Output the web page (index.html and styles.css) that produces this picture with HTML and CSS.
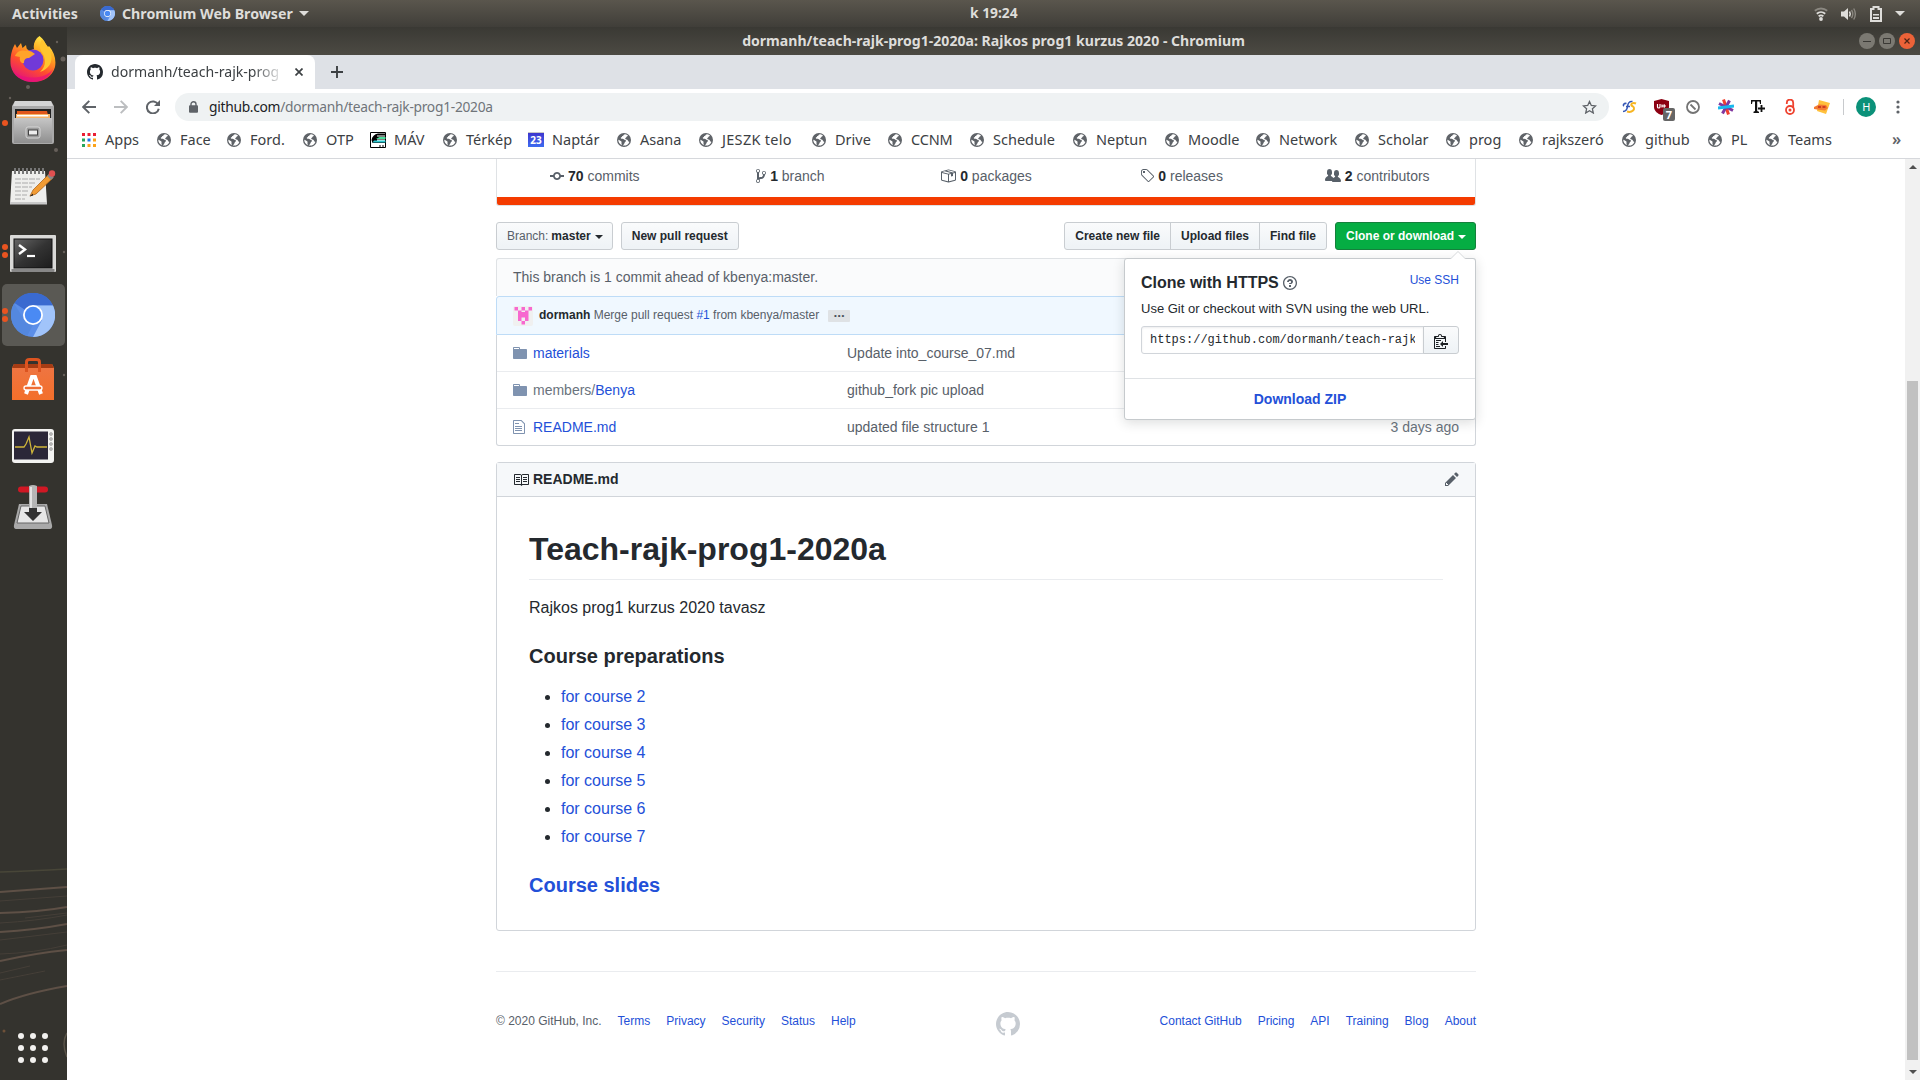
FILE: index.html
```html
<!DOCTYPE html>
<html lang="en">
<head>
<meta charset="utf-8">
<title>dormanh/teach-rajk-prog1-2020a: Rajkos prog1 kurzus 2020</title>
<link rel="stylesheet" href="styles.css">
</head>
<body>
<svg width="0" height="0" class="defs">
  <defs>
    <symbol id="globe" viewBox="0 0 14 14"><circle cx="7" cy="7" r="7" fill="#5f6368"/><path d="M8.2 1.2C6.8 1.6 6.1 2.3 6 3.4c-.3.9-1.8.3-2.2 1.4-.1.7.6 1.1 1.3 1 1 0 1.400.5 2.300.9.9.3 1.800.5 1.600 1.400-.3.9-1.500 1.300-1.700 2.300-.1.900-.9 1.400-1.600 2 2.800.7 5.800-.8 6.700-3.500-.7-.2-1.300-.7-1.500-1.500-.5-1.200-2.400-.6-2.700-1.700-.1-.9 1.100-.9 1.200-1.700.4-.8 1.400-.7 1.600-1.300C10.500 2 9.400 1.300 8.200 1.200z" fill="#fff"/><path d="M1.300 6.800c.9.300 2.300.9 3.100 1.700.5.700-.2 1.500.2 2.400l.3 1.300C2.700 11.300 1.200 9.300 1.300 6.800z" fill="#fff"/></symbol>
    <symbol id="chromium" viewBox="0 0 44 44"><circle cx="22" cy="22" r="22" fill="#5b8ee8"/><path d="M22 22 3.500 10A22 22 0 0 1 42 12.500H22z" fill="#3a6ad0"/><path d="M22 12.500h20A22 22 0 0 1 22 44l9-17z" fill="#a1c4fa"/><path d="M3 10.500 13.500 27 22 32l-6 11A22 22 0 0 1 3 10.500z" fill="#5488df"/><circle cx="22" cy="22" r="10" fill="#fff"/><circle cx="22" cy="22" r="8.200" fill="#4a8af4"/></symbol>
    <symbol id="octocat" viewBox="0 0 16 16"><path fill-rule="evenodd" d="M8 0C3.580 0 0 3.580 0 8c0 3.540 2.290 6.530 5.470 7.590.4.070.55-.17.55-.38 0-.19-.01-.82-.01-1.490-2.010.37-2.530-.49-2.690-.94-.09-.23-.48-.94-.82-1.130-.28-.15-.68-.52-.01-.53.63-.01 1.080.58 1.230.82.72 1.210 1.870.87 2.330.66.070-.52.28-.87.51-1.070-1.780-.2-3.640-.89-3.640-3.950 0-.87.31-1.590.82-2.150-.08-.2-.36-1.020.08-2.120 0 0 .67-.21 2.200.82.64-.18 1.320-.27 2-.27.68 0 1.360.09 2 .27 1.530-1.040 2.200-.82 2.200-.82.44 1.100.16 1.920.08 2.120.51.56.82 1.270.82 2.150 0 3.070-1.870 3.750-3.650 3.950.29.25.54.73.54 1.480 0 1.070-.01 1.930-.01 2.200 0 .21.15.46.55.38A8.013 8.013 0 0 0 16 8c0-4.420-3.580-8-8-8z"/></symbol>
    <linearGradient id="ffg" x1="0.800" y1="0" x2="0.300" y2="1"><stop offset="0" stop-color="#fff44f"/><stop offset=".35" stop-color="#ffa51f"/><stop offset=".65" stop-color="#ff4d2e"/><stop offset="1" stop-color="#e3127c"/></linearGradient>
    <linearGradient id="cab" x1="0" y1="0" x2="0" y2="1"><stop offset="0" stop-color="#c6c6c6"/><stop offset="1" stop-color="#8f8f8f"/></linearGradient>
    <linearGradient id="scr" x1="0" y1="0" x2="1" y2="1"><stop offset="0" stop-color="#666"/><stop offset=".5" stop-color="#333"/><stop offset="1" stop-color="#1c1c1c"/></linearGradient>
    <linearGradient id="bag" x1="0" y1="0" x2="0" y2="1"><stop offset="0" stop-color="#ee7544"/><stop offset="1" stop-color="#f36f2a"/></linearGradient>
  </defs>
</svg>

<header class="topbar">
  <span class="activities">Activities</span>
  <svg class="app-icon" width="15" height="15"><use href="#chromium"/></svg>
  <span class="app-name">Chromium Web Browser</span>
  <i class="tri"></i>
  <span class="clock">k 19:24</span>
  <div class="tray">
    <svg width="14" height="14" viewBox="0 0 14 14" fill="none" stroke-width="1.800"><path d="M.8 3.800a9.500 9.500 0 0 1 12.400 0" stroke="#8b8881"/><path d="M2.800 6.700a6.500 6.500 0 0 1 8.400 0M4.600 9.200a4 4 0 0 1 4.800 0" stroke="#deddda"/><circle cx="7" cy="12" r="1.900" fill="#deddda"/></svg>
    <svg width="16" height="14" viewBox="0 0 16 14" fill="none"><path d="M0 4.500h3L7 1v12L3 9.500H0z" fill="#deddda"/><path d="M8.500 4.500q1.500 2.500 0 5" stroke="#deddda" stroke-width="1.500"/><path d="M10.500 3q2.600 4 0 8M12.700 1.500q3.300 5.500 0 11" stroke="#8b8881" stroke-width="1.400"/></svg>
    <svg width="12" height="16" viewBox="0 0 12 16"><path d="M1 3h2.500V1h5v2H11v12H1z" fill="none" stroke="#deddda" stroke-width="2"/><path d="M3 8h6v1.500H3zM3 11h6v2H3z" fill="#deddda"/></svg>
    <i class="tri"></i>
  </div>
</header>

<div class="desktop">
  <nav class="dock">
    <svg class="wall" width="67" height="1053" viewBox="0 27 67 1053" fill="none" stroke="#5e5046" stroke-width="1.500">
      <path d="M0 872q30-1 67-3" stroke="#484638"/><path d="M0 892l67-5M0 913q40-1 67-6M0 932q35-2 67-8M0 961q36-8 67-11M0 1004q26-11 67-18" stroke-width="2"/>
      <path d="M0 923q36-2 67-8M25 918l42-5M0 954q34-1 67-9M0 980l45-9M0 973l30-7M0 901l67-5M0 940l67-8" stroke="#453f38" stroke-width="1"/>
      <path d="M67 1033q-6 10 0 24" stroke="#595348"/>
      <g fill="#66605a" stroke="none"><circle cx="63" cy="59" r="2.500"/><circle cx="28" cy="87" r="2"/><circle cx="56" cy="150" r="2"/><circle cx="10" cy="98" r="1.200"/><circle cx="57" cy="42" r="1.200"/><circle cx="64" cy="252" r="1.200"/><circle cx="64" cy="375" r="1.200"/><circle cx="4" cy="1031" r="1.500" fill="#6d5038"/></g>
    </svg>
    <div class="slot">
      <svg width="46" height="48" viewBox="0 0 46 48"><path d="M29.500 1c4 3 6.500 7 7.500 12l2-2c5 6 7.500 13 6 21C42.500 41 34 47 23 47S3 41 .8 31C-.5 23 2 14 5 9l2 4 4-5 1.500 5L16 10c.5 3 .5 5 4 5.500l4-1.500c-1-5 1-10 5.500-13z" fill="url(#ffg)"/><circle cx="23" cy="25" r="10.500" fill="#7139d8"/><path d="M14 28c0-4 2-5 5-5l6-4c-3-3-7-4-9-3-6-2-10 2-11 5l5 1c-1 3 1 7 4 6z" fill="#ffa32a"/><path d="M31 16c5 6 6 15-1 21 9-3 13-10 11-18-1-7-6-10-9-15-2 4-3 8-1 12z" fill="#ffc52e"/><path d="M3 36c7 8 32 10 40-2-3 8-11 13-20 13S6 42 3 36z" fill="#e8107c" opacity=".7"/></svg>
    </div>
    <div class="slot"><i class="dots one"></i>
      <svg width="42" height="44" viewBox="0 0 42 44"><path d="M3 0h36l3 5v36q0 2-2 2H2q-2 0-2-2V5z" fill="#a9a9a9"/><path d="M3 0h36l2 5H1z" fill="#d4d4d4"/><path d="M3 8h36v12H3z" fill="#222"/><path d="M5 10h30l2 8H5z" fill="#e0571b"/><path d="M4 13h34v5H4z" fill="#f5b46a"/><path d="M5 14h31v1.500H5z" fill="#fff"/><path d="M2 17h38v25H2z" fill="url(#cab)"/><rect x="14" y="26" width="14" height="11" rx="2" fill="#9b9b9b" stroke="#d6d6d6"/><rect x="16.500" y="29" width="9" height="5" fill="#eee" stroke="#444"/></svg>
    </div>
    <div class="slot">
      <svg width="46" height="38" viewBox="0 0 46 38"><path d="M2 3h33l2 33H0z" fill="#eeeeec"/><path d="M0 34h37v2.500H0z" fill="#c9c9c9"/><path d="M5 0v6M9 0v6M13 0v6M17 0v6M21 0v6M25 0v6M29 0v6M33 0v6" stroke="#777" stroke-width="2"/><path d="M5 11h25M5 15h21M5 19h17M5 23h14M5 27h12M5 31h10" stroke="#aaa" stroke-dasharray="6 1"/><path d="M20 28l3-6L39 6l4 4-17 16z" fill="#f19b33" stroke="#a35a12" stroke-width=".7"/><path d="M37 8l3-3 4 4-3 3z" fill="#888"/><circle cx="42" cy="5.500" r="3.200" fill="#e05050"/><path d="M19.500 28.500l3.500-3v2z" fill="#222"/></svg>
    </div>
    <div class="slot low"><i class="dots two"></i>
      <svg width="46" height="37" viewBox="0 0 46 37"><rect width="46" height="37" rx="1" fill="#d9d9d7"/><rect x="1.500" y="34" width="43" height="3" fill="#888"/><rect x="4" y="4" width="38" height="29" fill="url(#scr)" stroke="#111"/><path d="M9 10l6 4.500L9 19" fill="none" stroke="#fff" stroke-width="2.400"/><path d="M17 21h8" stroke="#fff" stroke-width="2.200"/></svg>
    </div>
    <div class="slot active"><i class="dots two"></i><svg width="44" height="44"><use href="#chromium"/></svg></div>
    <div class="slot">
      <svg width="42" height="43" viewBox="0 0 42 43"><path d="M0 10l2-4h38l2 4v32H0z" fill="url(#bag)"/><path d="M0 10l2-4h38l2 4z" fill="#a63c14"/><path d="M14.500 14V4q0-2.500 3-2.500h7q3 0 3 2.500v10" fill="none" stroke="#dc5420" stroke-width="3"/><path d="M14 36l6-17h3l6 17" fill="none" stroke="#fff" stroke-width="4"/><rect x="12" y="28" width="18" height="4" rx="2" fill="#ef6c33" stroke="#fff" stroke-width="1.300"/></svg>
    </div>
    <div class="slot lower">
      <svg width="42" height="34" viewBox="0 0 42 34"><rect width="42" height="34" rx="3" fill="#f3f3f1"/><rect x="2" y="2.500" width="34" height="28" fill="#2b2738"/><path d="M3 18h9l2-3 3-7 3 16 3-7 2 1h10" fill="none" stroke="#cfb53a" stroke-width="1.300"/><g fill="#bbb" stroke="#888" stroke-width=".5"><circle cx="39" cy="5" r="1.500"/><circle cx="39" cy="10" r="1.500"/><circle cx="39" cy="15" r="1.500"/><circle cx="39" cy="20" r="1.500"/></g></svg>
    </div>
    <div class="slot">
      <svg width="40" height="45" viewBox="0 0 40 45"><path d="M6 19h28l5 21q.5 4-2 4H3q-2.500 0-2-4z" fill="#a9a9a9"/><path d="M8 21h24l4 17H4z" fill="#e6e6e6" stroke="#666"/><rect x="5" y="1.500" width="30" height="6" rx="3" fill="#d01824"/><path d="M16 1q4-2 8 0v27h-8z" fill="#b5b5b5"/><path d="M18 2v26" stroke="#e2e2e2" stroke-width="2"/><path d="M11 27h5v-4h8v4h5l-9 9z" fill="#333"/></svg>
    </div>
    <svg class="grid-icon" width="30" height="30" viewBox="0 0 30 30" fill="#f2f1ef"><circle cx="3" cy="3" r="3"/><circle cx="15" cy="3" r="3"/><circle cx="27" cy="3" r="3"/><circle cx="3" cy="15" r="3"/><circle cx="15" cy="15" r="3"/><circle cx="27" cy="15" r="3"/><circle cx="3" cy="27" r="3"/><circle cx="15" cy="27" r="3"/><circle cx="27" cy="27" r="3"/></svg>
  </nav>

  <section class="window">
    <div class="titlebar">
      <span class="wtitle">dormanh/teach-rajk-prog1-2020a: Rajkos prog1 kurzus 2020 - Chromium</span>
      <div class="wbtns">
        <svg width="16" height="16" viewBox="0 0 16 16"><circle cx="8" cy="8" r="8" fill="#7b7972"/><path d="M4 8.500h8" stroke="#3a3935"/></svg>
        <svg width="16" height="16" viewBox="0 0 16 16"><circle cx="8" cy="8" r="8" fill="#7b7972"/><path d="M4.500 5.500h7v5h-7z" stroke="#3a3935" fill="none"/></svg>
        <svg width="16" height="16" viewBox="0 0 16 16"><circle cx="8" cy="8" r="8" fill="#ec6238"/><path d="M5.500 5.500l5 5m0-5l-5 5" stroke="#4e2415" stroke-width="1.200"/></svg>
      </div>
    </div>
    <div class="tabs">
      <div class="tab">
        <svg width="16" height="16" fill="#24292e"><use href="#octocat"/></svg>
        <span class="tabtext">dormanh/teach-rajk-prog</span>
        <svg width="8" height="8" viewBox="0 0 8 8"><path d="M.5.500l7 7m0-7l-7 7" stroke="#3c4043" stroke-width="1.700"/></svg>
      </div>
      <svg class="plus" width="12" height="12" viewBox="0 0 12 12"><path d="M6 0v12M0 6h12" stroke="#3c4043" stroke-width="1.900"/></svg>
    </div>
    <div class="toolbar">
      <svg class="nav" width="14" height="14" viewBox="0 0 14 14" fill="none" stroke="#5f6368" stroke-width="1.900"><path d="M14 7H1.500M7.300.8L1.200 7l6.100 6.200"/></svg>
      <svg class="nav" width="14" height="14" viewBox="0 0 14 14" fill="none" stroke="#bcbec0" stroke-width="1.900"><path d="M0 7h12.500M6.700.8L12.800 7l-6.100 6.200"/></svg>
      <svg class="nav" width="14" height="14" viewBox="0 0 14 14"><path d="M12.200 4.500A6 6 0 1 0 12.800 8.700" fill="none" stroke="#5f6368" stroke-width="2"/><path d="M14 0v6H8z" fill="#5f6368"/></svg>
      <div class="omni">
        <svg width="9" height="12" viewBox="0 0 9 12"><path d="M2 5V3.200a2.500 2.500 0 0 1 5 0V5" fill="none" stroke="#5f6368" stroke-width="1.400"/><rect y="4.300" width="9" height="7.400" rx="1" fill="#5f6368"/></svg>
        <span class="url"><b>github.com</b>/dormanh/teach-rajk-prog1-2020a</span>
        <svg class="star" width="15" height="14" viewBox="0 0 15 14"><path d="M7.500 1.500l1.800 4 4.300.4-3.200 2.900.9 4.200-3.800-2.200L3.700 13l.9-4.200L1.400 5.900l4.300-.4z" fill="none" stroke="#5f6368" stroke-width="1.300"/></svg>
      </div>
      <div class="exts">
        <svg width="16" height="16" viewBox="0 0 16 16" fill="none"><path d="M11.500 2.500C8 2 7 4 6.500 7.500c-.5 3.500-1.500 5-4.500 5M5.500 4.500C3 4 1.500 6 3 7M5 7.500h4" stroke="#3557b5" stroke-width="1.600"/><path d="M15 4.500c-3-1.500-5.500.2-4.500 2 1 1 3 1 2.500 3.500-.5 2.500-4 3.500-7 2.500" stroke="#f7b521" stroke-width="2"/></svg>
        <div class="ublock"><svg width="15" height="16" viewBox="0 0 15 16"><path d="M7.500 0L15 2v6c0 4-4 7-7.500 8C4 15 0 12 0 8V2z" fill="#8c0012"/><path d="M3.500 5v3q0 1 1.200 1T6 8V5M12 7H8.500M10.200 5.200v3.600M8 5.500v3" stroke="#fff" stroke-width="1.200" fill="none"/></svg><span>7</span></div>
        <svg width="14" height="14" viewBox="0 0 14 14" fill="none" stroke="#747474" stroke-width="1.800"><circle cx="7" cy="7" r="6"/><path d="M4.500 4.500l5 5"/></svg>
        <svg width="16" height="16" viewBox="0 0 16 16" stroke-width="3"><path d="M5.500 0.500l5 15" stroke="#f0402e"/><path d="M11.500 1.500L4.500 14.500" stroke="#8038a0"/><path d="M1 4.500l14 7" stroke="#8038a0"/><path d="M0 9l16-2" stroke="#18b7ed"/></svg>
        <svg width="14" height="14" viewBox="0 0 14 14"><path d="M0 0h10v4H9L8.500 1.500H6.200V11l1.800.7V13H2.500v-1.300L4 11V1.500H1.500L1 4H0z" fill="#111"/><path d="M10.500 5v7M7 8.500h7" stroke="#111" stroke-width="1.800"/></svg>
        <svg width="10" height="16" viewBox="0 0 10 16" fill="none" stroke="#ee4330"><path d="M1.800 5V3.800a3.200 3.200 0 0 1 6.400 0V9" stroke-width="1.800"/><circle cx="5" cy="11" r="4" stroke-width="1.800"/><circle cx="5" cy="11" r="1.500" fill="#ee4330" stroke="none"/></svg>
        <svg width="16" height="14" viewBox="0 0 16 14"><path d="M5 0l11 3-4 11-9-3z" fill="#ffc13c"/><path d="M0 7l5-2.500 7 .5 2 3-3 2.500-8-1L0 9z" fill="#f47b32"/><path d="M4 7h3m1.500 0h3" stroke="#c0281c" stroke-width="1.600"/></svg>
      </div>
      <i class="vsep"></i>
      <span class="avatar">H</span>
      <svg class="kebab" width="4" height="14" viewBox="0 0 4 14" fill="#5f6368"><circle cx="2" cy="2" r="1.600"/><circle cx="2" cy="7" r="1.600"/><circle cx="2" cy="12" r="1.600"/></svg>
    </div>
    <div class="bookmarks">
      <a><svg width="14" height="14" viewBox="0 0 14 14"><g fill="#ea1e34"><path d="M0 0h3v3H0zM5.500 0h3v3h-3zM11 0h3v3h-3z"/></g><path d="M0 5.500h3v3H0zM0 11h3v3H0z" fill="#26a65b"/><path d="M5.500 5.500h3v3h-3z" fill="#1a73e8"/><path d="M11 5.500h3v3h-3zM5.500 11h3v3h-3zM11 11h3v3h-3z" fill="#fba31b"/></svg>Apps</a>
      <a><svg width="14" height="14"><use href="#globe"/></svg>Face</a>
      <a><svg width="14" height="14"><use href="#globe"/></svg>Ford.</a>
      <a><svg width="14" height="14"><use href="#globe"/></svg>OTP</a>
      <a><svg class="fav" width="16" height="16" viewBox="0 0 16 16"><path d="M.5.500h15v15H.5z" fill="#fff" stroke="#000"/><path d="M15.500 1.500H8Q2.500 2.500 1.500 8l1 3H15.500V9H7V7.500h8.500V4.500H7V3.500h8.500z" fill="#000"/><path d="M15.500 5H9.500L6 7h9.500z" fill="#48e09a"/><path d="M15.500 8.500H4l-1.500 2H15.500z" fill="#2dc7cf"/><path d="M9 14h6" stroke="#000" stroke-dasharray="2 1"/></svg>MÁV</a>
      <a><svg width="14" height="14"><use href="#globe"/></svg>Térkép</a>
      <a><span class="cal">23</span>Naptár</a>
      <a><svg width="14" height="14"><use href="#globe"/></svg>Asana</a>
      <a><svg width="14" height="14"><use href="#globe"/></svg><span class="wide">JESZK telo</span></a>
      <a><svg width="14" height="14"><use href="#globe"/></svg>Drive</a>
      <a><svg width="14" height="14"><use href="#globe"/></svg><span class="tight">CCNM</span></a>
      <a><svg width="14" height="14"><use href="#globe"/></svg>Schedule</a>
      <a><svg width="14" height="14"><use href="#globe"/></svg>Neptun</a>
      <a><svg width="14" height="14"><use href="#globe"/></svg>Moodle</a>
      <a><svg width="14" height="14"><use href="#globe"/></svg>Network</a>
      <a><svg width="14" height="14"><use href="#globe"/></svg>Scholar</a>
      <a><svg width="14" height="14"><use href="#globe"/></svg>prog</a>
      <a><svg width="14" height="14"><use href="#globe"/></svg>rajkszeró</a>
      <a><svg width="14" height="14"><use href="#globe"/></svg>github</a>
      <a><svg width="14" height="14"><use href="#globe"/></svg>PL</a>
      <a><svg width="14" height="14"><use href="#globe"/></svg>Teams</a>
      <span class="more">»</span>
    </div>

    <div class="viewport">
      <main class="page">
        <div class="summary">
          <div class="stats">
            <span><svg width="14" height="16" viewBox="0 0 14 16"><path d="M10.860 7c-.45-1.720-2-3-3.860-3-1.860 0-3.410 1.280-3.860 3H0v2h3.140c.45 1.720 2 3 3.860 3 1.860 0 3.410-1.280 3.860-3H14V7h-3.140zM7 10.200c-1.220 0-2.200-.98-2.200-2.200 0-1.220.98-2.200 2.200-2.200 1.220 0 2.200.98 2.200 2.200 0 1.220-.98 2.200-2.200 2.200z"/></svg><b>70</b> commits</span>
            <span><svg width="10" height="16" viewBox="0 0 10 16"><path fill-rule="evenodd" d="M10 5c0-1.110-.89-2-2-2a1.993 1.993 0 0 0-1 3.720v.3c-.02.52-.23.98-.63 1.380-.4.4-.86.61-1.380.63-.83.020-1.480.16-2 .45V4.720a1.993 1.993 0 0 0-1-3.720C.88 1 0 1.890 0 3a2 2 0 0 0 1 1.720v6.560c-.59.35-1 .99-1 1.720 0 1.110.89 2 2 2 1.110 0 2-.89 2-2 0-.53-.2-1-.53-1.360.09-.06.48-.41.59-.47.25-.11.56-.17.94-.17 1.050-.05 1.950-.45 2.750-1.250S8.950 7.770 9 6.730h-.02C9.590 6.370 10 5.730 10 5zM2 1.800c.66 0 1.200.55 1.200 1.200 0 .65-.55 1.200-1.200 1.200C1.350 4.200.8 3.650.8 3c0-.65.55-1.200 1.200-1.200zm0 12.410c-.66 0-1.200-.55-1.200-1.200 0-.65.55-1.200 1.200-1.200.65 0 1.200.55 1.200 1.200 0 .65-.55 1.200-1.200 1.200zm6-8c-.66 0-1.200-.55-1.200-1.200 0-.65.55-1.200 1.200-1.200.65 0 1.200.55 1.200 1.200 0 .65-.55 1.200-1.200 1.200z"/></svg><b>1</b> branch</span>
            <span><svg width="16" height="16" viewBox="0 0 16 16"><path fill-rule="evenodd" d="M1 4.270v7.470c0 .45.3.84.75.97l6.500 1.730c.16.050.34.050.5 0l6.500-1.730c.45-.13.75-.52.75-.97V4.270c0-.45-.3-.84-.75-.97l-6.500-1.740a1.400 1.400 0 0 0-.5 0L1.750 3.300c-.45.13-.75.52-.75.97zm7 9.090l-6-1.590V5l6 1.610v6.750zM2 4l2.500-.67L11 5.060l-2.500.67L2 4zm13 7.770l-6 1.590V6.610l2-.55V8.500l2-.53V5.530L15 5v6.770zm-2-7.240L6.500 2.800l2-.53L15 4l-2 .53z"/></svg><b>0</b> packages</span>
            <span><svg width="14" height="16" viewBox="0 0 14 16"><path fill-rule="evenodd" d="M7.730 1.730C7.260 1.260 6.620 1 5.960 1H3.500C2.130 1 1 2.130 1 3.500v2.470c0 .66.27 1.300.73 1.770l6.060 6.060c.39.39 1.020.39 1.410 0l4.590-4.590a.996.996 0 0 0 0-1.410L7.730 1.730zM2.380 7.090c-.31-.3-.47-.7-.47-1.130V3.500c0-.88.72-1.590 1.590-1.590h2.470c.42 0 .83.16 1.130.47l6.140 6.130-4.730 4.730-6.130-6.150zM3.010 3h2v2H3V3h.01z"/></svg><b>0</b> releases</span>
            <span><svg width="16" height="16" viewBox="0 0 16 16"><path d="M16 12.999c0 .439-.45 1-1 1H7.995c-.539 0-.994-.447-.995-.999H1c-.54 0-1-.561-1-1 0-2.634 3-4 3-4s.229-.409 0-1c-.841-.621-1.058-.59-1-3 .058-2.419 1.367-3 2.500-3s2.442.58 2.500 3c.058 2.410-.159 2.379-1 3-.229.59 0 1 0 1s1.549.711 2.420 2.088C9.196 9.369 10 8.999 10 8.999s.229-.409 0-1c-.841-.62-1.058-.59-1-3 .058-2.419 1.367-3 2.500-3s2.437.581 2.495 3c.059 2.410-.158 2.380-1 3-.229.59 0 1 0 1s3.005 1.366 3.005 4z"/></svg><b>2</b> contributors</span>
          </div>
          <div class="lang"></div>
        </div>

        <div class="actions">
          <button class="btn"><span class="muted">Branch:</span> master<i class="caret"></i></button>
          <button class="btn">New pull request</button>
          <div class="group"><button class="btn">Create new file</button><button class="btn">Upload files</button><button class="btn">Find file</button></div>
          <div class="clone">
            <button class="btn green">Clone or download<i class="caret"></i></button>
            <div class="popup">
              <div class="popbody">
                <div class="pophead"><h4>Clone with HTTPS <svg width="14" height="16" viewBox="0 0 14 16"><path fill-rule="evenodd" d="M6 10h2v2H6v-2zm4-3.500C10 8.640 8 9 8 9H6c0-.55.45-1 1-1h.5c.28 0 .5-.22.5-.5v-1c0-.28-.22-.5-.5-.5h-1c-.28 0-.5.22-.5.5V7H4c0-1.500 1.500-3 3-3s3 1 3 2.500zM7 2.300c3.140 0 5.700 2.560 5.700 5.700s-2.560 5.700-5.700 5.700A5.710 5.710 0 0 1 1.300 8c0-3.140 2.560-5.700 5.700-5.700zM7 1C3.140 1 0 4.140 0 8s3.140 7 7 7 7-3.140 7-7-3.140-7-7-7z"/></svg></h4><a>Use SSH</a></div>
                <p>Use Git or checkout with SVN using the web URL.</p>
                <div class="urlrow"><div class="urlbox"><span>https://github.com/dormanh/teach-rajk</span></div><button class="btn copy"><svg width="14" height="16" viewBox="0 0 14 16"><path fill-rule="evenodd" d="M2 13h4v1H2v-1zm5-6H2v1h5V7zm2 3V8l-3 3 3 3v-2h5v-2H9zM4.500 9H2v1h2.500V9zM2 12h2.500v-1H2v1zm9 1h1v2c-.02.28-.11.52-.3.7-.19.18-.42.28-.7.3H1c-.55 0-1-.45-1-1V4c0-.55.45-1 1-1h3c0-1.110.89-2 2-2 1.110 0 2 .89 2 2h3c.55 0 1 .45 1 1v5h-1V6H1v9h10v-2zM2 5h8c0-.55-.45-1-1-1H8c-.55 0-1-.45-1-1s-.45-1-1-1-1 .45-1 1-.45 1-1 1H3c-.55 0-1 .45-1 1z"/></svg></button></div>
              </div>
              <a class="zip">Download ZIP</a>
            </div>
          </div>
        </div>

        <div class="branchinfo">This branch is 1 commit ahead of kbenya:master.</div>
        <div class="tease">
          <svg width="20" height="20" viewBox="0 0 20 20"><rect width="20" height="20" rx="2" fill="#f0f0f0"/><path d="M1.500 1H5v3.500H1.500zM8.500 1H12v3.500H8.500zM15.500 1H19v3.500h-3.500zM5 4.500h3.500V6H12V4.500h3.500V15H12v-3.500H8.500V15H5zM8.500 15H12v3.500H8.500z" fill="#f768cf"/></svg>
          <span class="cmsg"><b>dormanh</b> Merge pull request <a>#1</a> from kbenya/master</span><span class="dots3">•••</span>
        </div>
        <div class="files">
          <div class="file"><svg width="14" height="16" viewBox="0 0 14 16"><path d="M13 4H7V3c0-.66-.31-1-1-1H1c-.55 0-1 .45-1 1v10c0 .55.45 1 1 1h12c.55 0 1-.45 1-1V5c0-.55-.45-1-1-1zM6 4H1V3h5v1z"/></svg><span><a>materials</a></span><span>Update into_course_07.md</span></div>
          <div class="file"><svg width="14" height="16" viewBox="0 0 14 16"><path d="M13 4H7V3c0-.66-.31-1-1-1H1c-.55 0-1 .45-1 1v10c0 .55.45 1 1 1h12c.55 0 1-.45 1-1V5c0-.55-.45-1-1-1zM6 4H1V3h5v1z"/></svg><span><i class="light">members/</i><a>Benya</a></span><span>github_fork pic upload</span></div>
          <div class="file"><svg width="12" height="16" viewBox="0 0 12 16"><path fill-rule="evenodd" d="M6 5H2V4h4v1zM2 8h7V7H2v1zm0 2h7V9H2v1zm0 2h7v-1H2v1zm10-7.500V14c0 .55-.45 1-1 1H1c-.55 0-1-.45-1-1V2c0-.55.45-1 1-1h7.500L12 4.500zM11 5L8 2H1v12h10V5z"/></svg><span><a>README.md</a></span><span>updated file structure 1</span><i class="light age">3 days ago</i></div>
        </div>

        <article class="readme">
          <header><svg width="16" height="16" viewBox="0 0 16 16"><path fill-rule="evenodd" d="M3 5h4v1H3V5zm0 3h4V7H3v1zm0 2h4V9H3v1zm11-5h-4v1h4V5zm0 2h-4v1h4V7zm0 2h-4v1h4V9zm2-6v9c0 .55-.45 1-1 1H9.500l-1 1-1-1H2c-.55 0-1-.45-1-1V3c0-.55.45-1 1-1h5.500l1 1 1-1H15c.55 0 1 .45 1 1zm-8 .5L7.500 3H2v9h6V3.500zm7-.5H9.500l-.5.5V12h6V3z"/></svg><h3>README.md</h3><svg class="pencil" width="14" height="16" viewBox="0 0 14 16"><path fill-rule="evenodd" d="M0 12v3h3l8-8-3-3-8 8zm3 2H1v-2h1v1h1v1zm10.300-9.300L12 6 9 3l1.300-1.300a.996.996 0 0 1 1.410 0l1.590 1.590c.39.39.39 1.020 0 1.410z"/></svg></header>
          <div class="md">
            <h1>Teach-rajk-prog1-2020a</h1>
            <p>Rajkos prog1 kurzus 2020 tavasz</p>
            <h2>Course preparations</h2>
            <ul><li><a>for course 2</a></li><li><a>for course 3</a></li><li><a>for course 4</a></li><li><a>for course 5</a></li><li><a>for course 6</a></li><li><a>for course 7</a></li></ul>
            <h2><a>Course slides</a></h2>
          </div>
        </article>

        <footer class="foot">
          <div><span>© 2020 GitHub, Inc.</span><a>Terms</a><a>Privacy</a><a>Security</a><a>Status</a><a>Help</a></div>
          <svg class="mark" width="24" height="24"><use href="#octocat"/></svg>
          <div><a>Contact GitHub</a><a>Pricing</a><a>API</a><a>Training</a><a>Blog</a><a>About</a></div>
        </footer>
      </main>
      <div class="scroll"><i class="up"></i><div class="thumb"></div><i class="down"></i></div>
    </div>
  </section>
</div>
</body>
</html>
```
FILE: styles.css
```css
* { box-sizing: border-box; }
body { margin: 0; width: 1920px; height: 1080px; overflow: hidden; display: flex; flex-direction: column; background: #fff; font-family: "Noto Sans", sans-serif; }
svg { flex: none; display: block; }
i { font-style: normal; }
.defs { position: absolute; }
button { font-family: inherit; margin: 0; }

/* shell bar */
.topbar { position: relative; height: 27px; flex: none; display: flex; align-items: center; padding: 0 12px; background: linear-gradient(#5a564d, #403e39); color: #deddda; font-size: 14.2px; font-weight: 700; }
.activities { width: 88px; padding-bottom: 1px; }
.app-icon { margin-right: 7px; }
.app-name { width: 172px; padding-bottom: 1px; white-space: nowrap; }
.tri { width: 0; height: 0; border: 5px solid transparent; border-bottom: 0; border-top-color: #deddda; margin-left: 5px; }
.clock { position: absolute; left: 970px; top: 3px; font-size: 13.8px; line-height: 19px; }
.tray { margin-left: auto; display: flex; align-items: center; gap: 13px; padding-right: 3px; }
.tray .tri { margin: 0; }

.desktop { flex: 1; display: flex; min-height: 0; }
.dock { position: relative; width: 67px; background: #34332e; display: flex; flex-direction: column; align-items: center; flex: none; }
.wall { position: absolute; left: 0; top: 0; }
.slot { position: relative; width: 63px; height: 62px; margin: 1px 3px 1px 2px; display: flex; align-items: center; justify-content: center; border-radius: 5px; }
.slot.active { background: #5a5954; }
.slot.low { padding-top: 4px; }
.slot.lower { padding-top: 6px; }
.dots { position: absolute; left: 0; width: 6px; height: 6px; border-radius: 3px; background: #e95420; }
.dots.two { top: 24px; box-shadow: 0 8px #e95420; }
.grid-icon { margin: auto 1px 17px 0; position: relative; }

/* window frame */
.window { flex: 1; min-width: 0; display: flex; flex-direction: column; }
.titlebar { position: relative; height: 28px; flex: none; background: linear-gradient(#3a3934, #4c4a43); display: flex; align-items: center; justify-content: center; color: #deddda; font-weight: 700; font-size: 14.08px; }
.wtitle { padding-bottom: 2px; }
.wbtns { position: absolute; right: 5px; top: 6px; display: flex; gap: 4px; }
.tabs { height: 34px; flex: none; background: #dee1e6; display: flex; align-items: center; padding-left: 8px; }
.tab { width: 240px; height: 34px; background: #fff; border-radius: 8px 8px 0 0; display: flex; align-items: center; padding: 0 12px; }
.tabtext { width: 173px; margin: 0 11px 0 8px; padding-bottom: 2px; overflow: hidden; white-space: nowrap; font-size: 14.1px; color: #3c4043; -webkit-mask: linear-gradient(90deg, #000 82%, transparent); mask: linear-gradient(90deg, #000 82%, transparent); }
.plus { margin-left: 16px; }

.toolbar { height: 36px; flex: none; display: flex; align-items: center; padding-left: 15px; }
.nav { margin-right: 18px; }
.omni { width: 1434px; height: 28px; border-radius: 14px; background: #eff2f3; display: flex; align-items: center; padding: 0 12px 0 14px; margin-left: -3px; }
.omni .url { margin-left: 11px; padding-bottom: 2px; font-size: 13.8px; letter-spacing: -.29px; color: #70757a; }
.omni .url b { font-weight: 400; color: #202124; }
.star { margin-left: auto; }
.exts { display: grid; grid-template-columns: repeat(7, 32.200px); justify-items: center; align-items: center; margin-left: 4px; }
.ublock { position: relative; }
.ublock span { position: absolute; left: 9px; top: 9px; width: 12px; height: 13px; background: #666; border-radius: 2px; color: #fff; font: 700 11px/13px "Noto Sans", sans-serif; text-align: center; }
.vsep { width: 1px; height: 16px; background: #c8cacd; margin: 0 12px 0 5px; }
.avatar { width: 20px; height: 20px; border-radius: 10px; background: #0b9179; color: #fff; font-size: 11px; line-height: 20px; text-align: center; }
.kebab { margin-left: 20px; }

.bookmarks { position: relative; height: 34px; flex: none; padding: 0 0 6px 15px; border-bottom: 1px solid #d6d8dc; display: grid; grid-template-columns: 75px 70px 76px 67px 73px 85px 89px 82px 113px 76px 82px 103px 92px 91px 99px 91px 73px 103px 86px 57px 127px 20px; align-items: center; color: #3c4043; font-size: 14.500px; }
.bookmarks a { display: flex; align-items: center; gap: 9px; white-space: nowrap; }
.bookmarks svg { margin-top: 2px; }
.bookmarks .fav { margin-right: -1px; }
.cal { width: 16px; height: 15px; margin: 2px -1px 0 0; background: linear-gradient(#3d36cf, #3d6cf0); border-top: 1px solid #c8c8c8; color: #fff; font: 700 10px/14px "Noto Sans", sans-serif; text-align: center; }
.tight { letter-spacing: -.15px; }
.wide { letter-spacing: .3px; }
.more { font-size: 16px; font-weight: 600; color: #5f6368; line-height: 20px; }

/* page */
.viewport { flex: 1; min-height: 0; display: flex; font-family: "Liberation Sans", Arial, sans-serif; font-size: 14px; line-height: 21px; color: #586069; background: #fff; }
.page { width: 980px; margin: 0 auto; display: flex; flex-direction: column; }
.page a { color: #2350d8; }
.page b { color: #24292e; }
.page svg path { fill: currentColor; }
.page .tease svg path { fill: #f768cf; }
.page .mark { fill: #c6cbd1; color: #c6cbd1; }
.summary { height: 47px; border: 1px solid #dfe2e5; border-top: 0; border-radius: 0 0 3px 3px; flex: none; overflow: hidden; display: flex; flex-direction: column; }
.stats { display: grid; grid-template-columns: repeat(5, 1fr); height: 38px; padding-top: 7px; }
.stats span { display: flex; justify-content: center; align-items: center; height: 20px; white-space: pre; }
.stats svg { margin-right: 4px; }
.lang { height: 8px; background: #f43b00; }

.actions { display: flex; margin-top: 16px; flex: none; height: 28px; }
.btn { height: 28px; padding: 0 10px; border: 1px solid #c9cdd1; border-radius: 3px; background: linear-gradient(#fafbfc, #eff3f6 90%); color: #24292e; font-size: 12px; font-weight: 700; line-height: 20px; white-space: nowrap; display: flex; align-items: center; }
.btn .muted { font-weight: 400; color: #586069; margin-right: 3px; }
.btn + .btn { margin-left: 8px; }
.caret { border: 4px solid transparent; border-top-color: currentColor; border-bottom: 0; margin: 1px -1px 0 4px; }
.group { margin-left: auto; display: flex; }
.group .btn + .btn { margin-left: -1px; }
.group .btn:first-child { border-radius: 3px 0 0 3px; }
.group .btn:nth-child(2) { border-radius: 0; }
.group .btn:last-child { border-radius: 0 3px 3px 0; }
.clone { position: relative; margin-left: 8px; }
.btn.green { background: #05ad43; border-color: #15803c; color: #fff; }
.popup { position: absolute; z-index: 5; right: 0; top: 36px; width: 352px; height: 162px; background: #fff; border: 1px solid #c6cacd; border-radius: 3px; box-shadow: 0 3px 12px rgba(27,31,35,.15); display: flex; flex-direction: column; }
.popup::before { content: ""; position: absolute; right: 9px; top: -8px; border: 8px solid transparent; border-top: 0; border-bottom-color: #d5d8da; }
.popup::after { content: ""; position: absolute; right: 10px; top: -7px; border: 7px solid transparent; border-top: 0; border-bottom-color: #fff; }
.popbody { height: 119px; padding: 12px 16px; }
.pophead { display: flex; justify-content: space-between; }
.pophead h4 { margin: 0; font-size: 16px; line-height: 24px; color: #24292e; display: flex; align-items: center; gap: 4px; }
.pophead h4 svg { color: #586069; }
.pophead a { font-size: 12px; line-height: 18px; }
.popup p { margin: 4px 0 7px; font-size: 13px; line-height: 20px; color: #24292e; }
.urlrow { display: flex; }
.urlbox { width: 283px; height: 28px; border: 1px solid #d1d5da; border-radius: 3px 0 0 3px; padding: 0 8px; box-shadow: inset 0 1px 2px rgba(27,31,35,.075); font: 12px/27px "Liberation Mono", monospace; color: #24292e; }
.urlbox span { display: block; overflow: hidden; white-space: nowrap; }
.copy { width: 36px; margin-left: -1px; border-radius: 0 3px 3px 0; padding: 1px 10px 0; color: #1b1f23; }
.zip { flex: 1; border-top: 1px solid #dfe2e5; text-align: center; font-weight: 700; line-height: 40px; }

.branchinfo { margin-top: 8px; flex: none; height: 38px; border: 1px solid #dfe2e5; border-bottom: 0; border-radius: 3px 3px 0 0; background: #fafbfc; padding: 8px 16px; }
.tease { flex: none; height: 39px; border: 1px solid #bedcf7; background: #f0f8ff; border-radius: 3px 3px 0 0; display: flex; align-items: center; padding: 0 16px; font-size: 12px; }
.cmsg { margin-left: 6px; }
.dots3 { margin-left: 9px; width: 22px; height: 12px; background: #dfe2e5; border-radius: 1px; font-size: 8px; line-height: 12px; letter-spacing: 1px; padding-left: 1px; text-align: center; color: #444d56; }
.files { flex: none; border: 1px solid #d1d5da; border-top: 0; border-radius: 0 0 3px 3px; }
.file { height: 37px; display: grid; grid-template-columns: 20px 314px 1fr auto; align-items: center; padding: 0 16px; border-top: 1px solid #eaecef; }
.file:first-child { border-top: 0; height: 36px; }
.file svg { color: #7f93b0; }
.light { color: #6a737d; }

.readme { margin-top: 16px; flex: none; height: 469px; border: 1px solid #d1d5da; border-radius: 3px; }
.readme header { height: 34px; background: #f6f8fa; border-bottom: 1px solid #d1d5da; padding: 0 16px; display: flex; align-items: center; color: #24292e; }
.readme h3 { margin: 0 0 0 4px; font-size: 14px; }
.pencil { margin: -2px 0 0 auto; color: #586069; }
.md { padding: 32px; font-size: 16px; line-height: 24px; color: #24292e; }
.md h1 { margin: 0 0 16px; padding-bottom: 10px; height: 51px; font-size: 32px; line-height: 40px; border-bottom: 1px solid #eaecef; }
.md p { margin: 0; }
.md h2 { margin: 24px 0 16px; font-size: 20px; line-height: 25px; }
.md ul { margin: 0; padding-left: 32px; }
.md li { height: 24px; margin-bottom: 4px; }
.md li:last-child { margin-bottom: 0; }
.foot { margin-top: 40px; border-top: 1px solid #eaecef; padding-top: 40px; display: flex; justify-content: space-between; font-size: 12px; line-height: 18px; }
.foot div { display: flex; gap: 16px; white-space: nowrap; }

.scroll { width: 15px; flex: none; background: #f1f1f1; display: flex; flex-direction: column; align-items: center; }
.up { border: 4px solid transparent; border-top: 0; border-bottom-color: #505050; margin-top: 6px; }
.down { border: 4px solid transparent; border-bottom: 0; border-top-color: #505050; margin-top: 10px; }
.thumb { width: 11px; height: 679px; margin-top: 212px; background: #c1c1c1; }
```
